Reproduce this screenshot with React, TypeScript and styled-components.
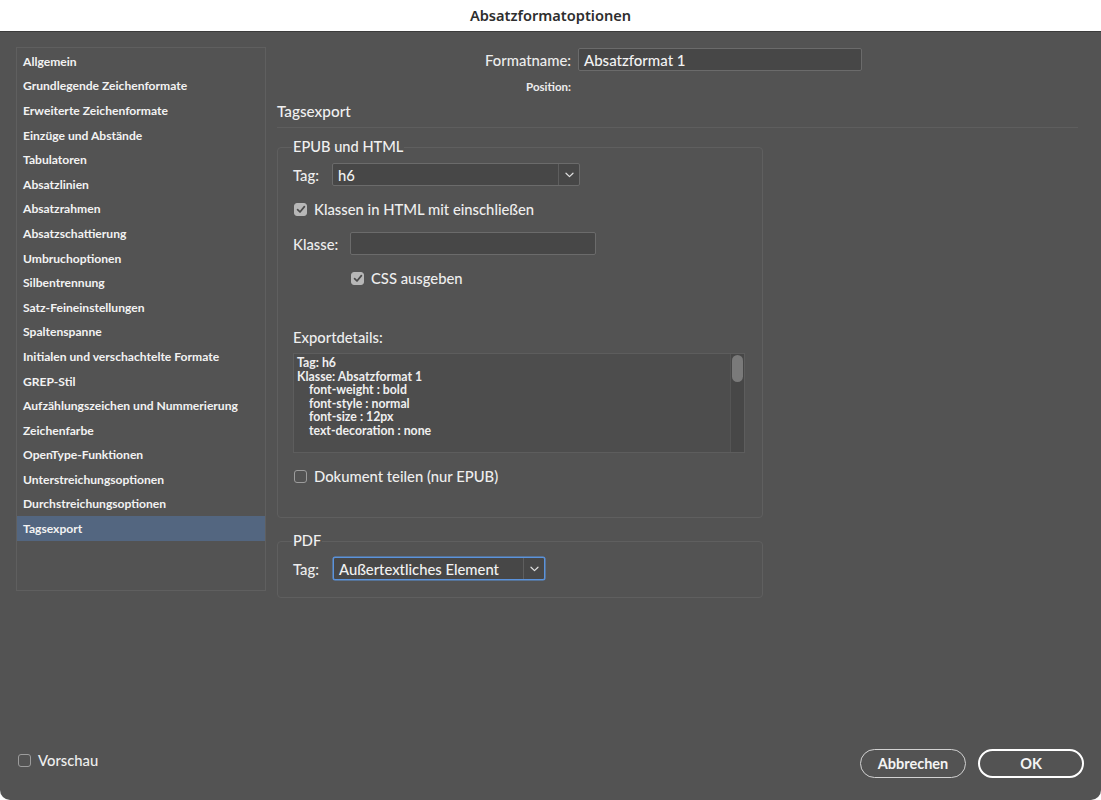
import styled, { createGlobalStyle } from 'styled-components'

const GlobalStyle = createGlobalStyle`
  html, body {
    margin: 0;
    padding: 0;
    background: #ffffff;
  }
  body {
    font-family: Lato, "Open Sans", "Liberation Sans", sans-serif;
    -webkit-font-smoothing: antialiased;
  }
  * { box-sizing: border-box; }
`

const Window = styled.div`
  width: 1101px;
  height: 800px;
  display: flex;
  flex-direction: column;
  background: #ffffff;
`

const TitleBar = styled.div`
  height: 32px;
  flex: none;
  display: flex;
  align-items: center;
  justify-content: center;
  padding-bottom: 2px;
  border-bottom: 1px solid #3b3b3b;
  font-family: "Noto Sans", "Open Sans", sans-serif;
  font-size: 14.6px;
  font-weight: 600;
  color: #2e2e2e;
`

const Body = styled.div`
  flex: 1;
  display: flex;
  flex-direction: column;
  background: #535353;
  border-radius: 0 0 10px 10px;
  padding: 15px 17px 22px 16px;
`

const Columns = styled.div`
  flex: 1;
  display: flex;
  gap: 11px;
  align-items: flex-start;
`

const Sidebar = styled.ul`
  width: 250px;
  height: 544px;
  margin: 0;
  padding: 1px 0 0;
  list-style: none;
  border: 1px solid #5f5f5f;
`

const SideItem = styled.li<{ $active?: boolean }>`
  height: 24.6px;
  display: flex;
  align-items: center;
  padding-left: 6px;
  font-size: 12.1px;
  font-weight: 700;
  color: #f2f2f2;
  background: ${({ $active }) => ($active ? '#536680' : 'transparent')};
`

const Main = styled.div`
  flex: 1;
  display: flex;
  flex-direction: column;
`

const NameRow = styled.div`
  display: grid;
  grid-template-columns: 294px 284px;
  column-gap: 7px;
  align-items: center;
  margin-top: 1px;
`

const RightLabel = styled.span<{ $small?: boolean }>`
  text-align: right;
  font-size: ${({ $small }) => ($small ? '11.5px' : '14.8px')};
  font-weight: ${({ $small }) => ($small ? 700 : 500)};
  color: #ededed;
`

const TextField = styled.div<{ $width: number }>`
  width: ${({ $width }) => $width}px;
  height: 23px;
  display: flex;
  align-items: center;
  padding-left: 5px;
  background: #474747;
  border: 1px solid #6b6b6b;
  border-radius: 2px;
  font-size: 15px;
  font-weight: 500;
  color: #f2f2f2;
`

const PositionRow = styled(NameRow)`
  margin-top: 6px;
  height: 19px;
`

const SectionTitle = styled.div`
  margin-top: 4px;
  margin-right: 6px;
  height: 22px;
  display: flex;
  align-items: center;
  font-size: 15.3px;
  font-weight: 500;
  color: #f0f0f0;
  border-bottom: 1px solid #5e5e5e;
  padding-bottom: 5px;
  box-sizing: content-box;
`

const Group = styled.fieldset<{ $height: number }>`
  width: 486px;
  height: ${({ $height }) => $height}px;
  margin: 0;
  padding: 8px 15px 0;
  border: 1px solid #5f5f5f;
  border-radius: 4px;
  min-inline-size: 0;
`

const EpubGroup = styled(Group)`
  margin-top: 11px;
`

const PdfGroup = styled(Group)`
  margin-top: 15px;
`

const Legend = styled.legend`
  margin-left: -1px;
  padding: 0 1px;
  font-size: 14.6px;
  font-weight: 500;
  line-height: 16px;
  color: #f0f0f0;
`

const Row = styled.div<{ $top?: number; $indent?: number }>`
  display: flex;
  align-items: center;
  margin-top: ${({ $top }) => $top ?? 0}px;
  padding-left: ${({ $indent }) => $indent ?? 0}px;
`

const PreviewRow = styled(Row)`
  margin-bottom: 7px;
`

const FieldLabel = styled.span<{ $width: number }>`
  width: ${({ $width }) => $width}px;
  flex: none;
  font-size: 14.8px;
  font-weight: 500;
  color: #ededed;
`

const Select = styled.div<{ $width: number; $focus?: boolean }>`
  width: ${({ $width }) => $width}px;
  height: 23px;
  display: flex;
  background: #474747;
  border: 1px solid ${({ $focus }) => ($focus ? '#5b93dc' : '#6b6b6b')};
  border-radius: 2px;
  box-shadow: ${({ $focus }) => ($focus ? '0 0 0 0.5px #5b93dc' : 'none')};
`

const SelectValue = styled.div`
  flex: 1;
  display: flex;
  align-items: center;
  padding-left: 5px;
  font-size: 14.8px;
  font-weight: 500;
  color: #f2f2f2;
`

const SelectArrow = styled.div`
  width: 21px;
  display: flex;
  align-items: center;
  justify-content: center;
  border-left: 1px solid #5e5e5e;
`

const Box = styled.span<{ $checked?: boolean }>`
  width: 13px;
  height: 13px;
  flex: none;
  display: inline-flex;
  align-items: center;
  justify-content: center;
  margin-left: 1px;
  margin-right: 7px;
  border-radius: 3px;
  background: ${({ $checked }) => ($checked ? '#b7b7b7' : 'transparent')};
  border: 1px solid ${({ $checked }) => ($checked ? '#b7b7b7' : '#9c9c9c')};
`

const CheckText = styled.span`
  font-size: 14.8px;
  font-weight: 500;
  color: #eeeeee;
`

const DetailsLabel = styled.div`
  margin-top: 41px;
  height: 18px;
  display: flex;
  align-items: center;
  font-size: 14.8px;
  font-weight: 500;
  color: #eeeeee;
`

const Details = styled.div`
  margin-top: 7px;
  width: 452px;
  height: 100px;
  display: flex;
  background: #4d4d4d;
  border: 1px solid #5d5d5d;
`

const DetailsText = styled.pre`
  flex: 1;
  margin: 0;
  padding: 2px 3px;
  font-family: Lato, "Open Sans", "Liberation Sans", sans-serif;
  font-size: 12.3px;
  font-weight: 700;
  line-height: 13.6px;
  color: #efefef;
  white-space: pre;
`

const ScrollTrack = styled.div`
  width: 14px;
  padding: 1px 1px 0;
  background: #474747;
  border-left: 1px solid #555555;
`

const ScrollThumb = styled.div`
  height: 27px;
  border-radius: 6px;
  background: #7a7a7a;
`

const Footer = styled.div`
  display: flex;
  align-items: center;
  justify-content: space-between;
  padding-left: 1px;
`

const Buttons = styled.div`
  display: flex;
  gap: 12px;
`

const Button = styled.button<{ $primary?: boolean }>`
  width: 106px;
  height: 29px;
  display: flex;
  align-items: center;
  justify-content: center;
  background: transparent;
  border: ${({ $primary }) => ($primary ? '2px solid #ffffff' : '1px solid #d2d2d2')};
  border-radius: 15px;
  font-family: Lato, "Open Sans", "Liberation Sans", sans-serif;
  font-size: 14.5px;
  font-weight: 700;
  color: #f4f4f4;
  padding: 0;
`

const Chevron = () => (
  <svg width="9" height="6" viewBox="0 0 9 6" fill="none">
    <path d="M1 1.2 L4.5 4.6 L8 1.2" stroke="#e0e0e0" strokeWidth="1.2" strokeLinecap="round" strokeLinejoin="round" />
  </svg>
)

const Tick = () => (
  <svg width="10" height="9" viewBox="0 0 10 9" fill="none">
    <path d="M1.6 4.6 L4 7 L8.4 1.6" stroke="#4a4a4a" strokeWidth="1.7" strokeLinecap="round" strokeLinejoin="round" />
  </svg>
)

const Checkbox = ({ checked, label }: { checked?: boolean; label: string }) => (
  <>
    <Box $checked={checked}>{checked && <Tick />}</Box>
    <CheckText>{label}</CheckText>
  </>
)

const sections = [
  'Allgemein',
  'Grundlegende Zeichenformate',
  'Erweiterte Zeichenformate',
  'Einzüge und Abstände',
  'Tabulatoren',
  'Absatzlinien',
  'Absatzrahmen',
  'Absatzschattierung',
  'Umbruchoptionen',
  'Silbentrennung',
  'Satz-Feineinstellungen',
  'Spaltenspanne',
  'Initialen und verschachtelte Formate',
  'GREP-Stil',
  'Aufzählungszeichen und Nummerierung',
  'Zeichenfarbe',
  'OpenType-Funktionen',
  'Unterstreichungsoptionen',
  'Durchstreichungsoptionen',
  'Tagsexport',
]

const details = `Tag: h6
Klasse: Absatzformat 1
    font-weight : bold
    font-style : normal
    font-size : 12px
    text-decoration : none`

export default function App() {
  return (
    <Window>
      <GlobalStyle />
      <TitleBar>Absatzformatoptionen</TitleBar>
      <Body>
        <Columns>
          <Sidebar>
            {sections.map((s) => (
              <SideItem key={s} $active={s === 'Tagsexport'}>
                {s}
              </SideItem>
            ))}
          </Sidebar>
          <Main>
            <NameRow>
              <RightLabel>Formatname:</RightLabel>
              <TextField $width={284}>Absatzformat 1</TextField>
            </NameRow>
            <PositionRow>
              <RightLabel $small>Position:</RightLabel>
            </PositionRow>
            <SectionTitle>Tagsexport</SectionTitle>

            <EpubGroup $height={379}>
              <Legend>EPUB und HTML</Legend>
              <Row>
                <FieldLabel $width={39}>Tag:</FieldLabel>
                <Select $width={248}>
                  <SelectValue>h6</SelectValue>
                  <SelectArrow>
                    <Chevron />
                  </SelectArrow>
                </Select>
              </Row>
              <Row $top={14}>
                <Checkbox checked label="Klassen in HTML mit einschließen" />
              </Row>
              <Row $top={14}>
                <FieldLabel $width={57}>Klasse:</FieldLabel>
                <TextField $width={246} />
              </Row>
              <Row $top={14} $indent={57}>
                <Checkbox checked label="CSS ausgeben" />
              </Row>
              <DetailsLabel>Exportdetails:</DetailsLabel>
              <Details>
                <DetailsText>{details}</DetailsText>
                <ScrollTrack>
                  <ScrollThumb />
                </ScrollTrack>
              </Details>
              <Row $top={14}>
                <Checkbox label="Dokument teilen (nur EPUB)" />
              </Row>
            </EpubGroup>

            <PdfGroup $height={65}>
              <Legend>PDF</Legend>
              <Row>
                <FieldLabel $width={40}>Tag:</FieldLabel>
                <Select $width={212} $focus>
                  <SelectValue>Außertextliches Element</SelectValue>
                  <SelectArrow>
                    <Chevron />
                  </SelectArrow>
                </Select>
              </Row>
            </PdfGroup>
          </Main>
        </Columns>
        <Footer>
          <PreviewRow>
            <Checkbox label="Vorschau" />
          </PreviewRow>
          <Buttons>
            <Button>Abbrechen</Button>
            <Button $primary>OK</Button>
          </Buttons>
        </Footer>
      </Body>
    </Window>
  )
}
